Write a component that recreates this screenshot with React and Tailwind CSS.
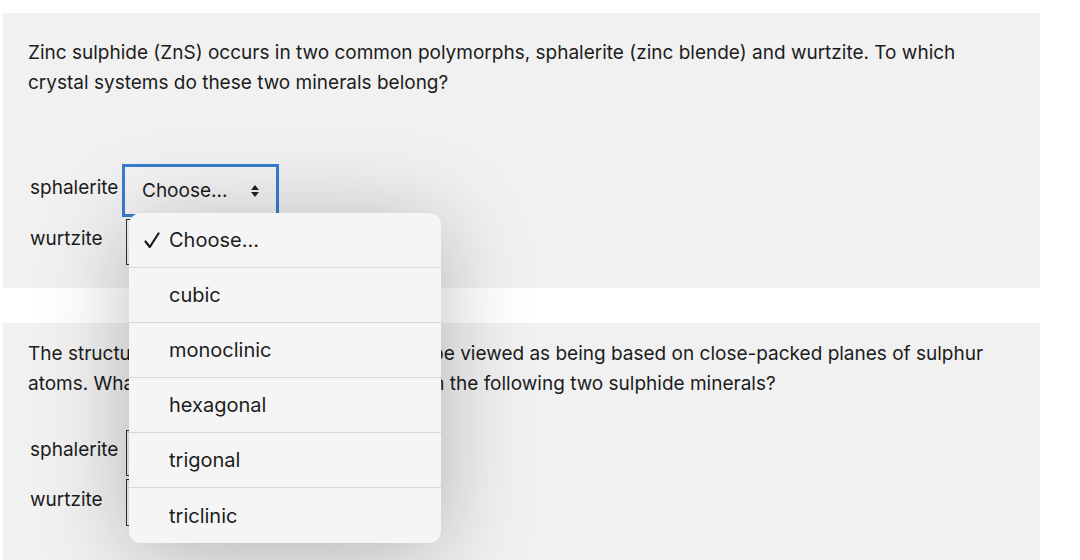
import { useState } from "react";

const OPTIONS = ["cubic", "monoclinic", "hexagonal", "trigonal", "triclinic"];

export default function App() {
  const [open] = useState(true);

  return (
    <div
      className="relative w-[1080px] h-[560px] overflow-hidden bg-white text-[19px] leading-[30px] text-[#1c1c1c]"
      style={{ fontFamily: "Inter, 'Noto Sans', sans-serif" }}
    >
      {/* Question 1 */}
      <div className="mt-[13px] ml-[3px] w-[1037px] h-[275px] bg-[#f1f1f1] px-[25px] pt-[25px]">
        <p>
          Zinc sulphide (ZnS) occurs in two common polymorphs, sphalerite (zinc blende) and wurtzite. To which
          <br />
          crystal systems do these two minerals belong?
        </p>

        <div className="mt-[66px] flex flex-col">
          <div className="flex items-center h-[53px]">
            <span className="w-[94px] shrink-0 pl-[2px] pb-[6px]">sphalerite</span>
            <div className="w-[157px] h-[53px] border-[3px] border-[#3a7bd0] bg-[#f3f3f3] flex items-center justify-between pl-[17px] pr-[16px]">
              <span>Choose...</span>
              <svg width="10" height="14" viewBox="0 0 10 14" className="text-[#222]">
                <path d="M5 1 L9 6 H1 Z" fill="currentColor" />
                <path d="M5 13 L9 8 H1 Z" fill="currentColor" />
              </svg>
            </div>
          </div>
          <div className="flex items-center h-[46px] mt-[2px]">
            <span className="w-[98px] shrink-0 pl-[2px] pb-[6px]">wurtzite</span>
            <div className="w-[149px] h-[46px] border border-[#333] bg-[#f3f3f3]" />
          </div>
        </div>
      </div>

      {/* Question 2 */}
      <div className="mt-[35px] ml-[3px] w-[1037px] h-[260px] bg-[#f1f1f1] px-[25px] pt-[16px]">
        <p>
          The structures of both of these minerals can be viewed as being based on close-packed planes of sulphur
          <br />
          atoms. What is the coordination type of zinc in the following two sulphide minerals?
        </p>

        <div className="mt-[31px] flex flex-col gap-[3px]">
          <div className="flex items-center h-[46px]">
            <span className="w-[98px] shrink-0 pl-[2px] pb-[6px]">sphalerite</span>
            <div className="w-[149px] h-[46px] border border-[#333] bg-[#f3f3f3]" />
          </div>
          <div className="flex items-center h-[47px]">
            <span className="w-[98px] shrink-0 pl-[2px] pb-[6px]">wurtzite</span>
            <div className="w-[149px] h-[47px] border border-[#333] bg-[#f3f3f3]" />
          </div>
        </div>
      </div>

      {/* Open select menu */}
      {open && (
        <div className="absolute left-[129px] top-[213px] w-[312px] rounded-[12px] bg-[#f5f5f5] shadow-[0_10px_90px_rgba(0,0,0,0.26)] overflow-hidden text-[20px]">
          <div className="h-[55px] flex items-center border-b border-[#d6d6d6]">
            <svg width="16" height="17" viewBox="0 0 16 17" className="ml-[15px] mr-[9px]">
              <path d="M1.5 9.5 L5.8 15 L14.5 1.5" fill="none" stroke="#1c1c1c" strokeWidth="2.2" strokeLinecap="round" strokeLinejoin="round" />
            </svg>
            <span>Choose...</span>
          </div>
          {OPTIONS.map((o, i) => (
            <div
              key={o}
              className={`h-[55px] flex items-center pl-[40px] ${i < OPTIONS.length - 1 ? "border-b border-[#d6d6d6]" : ""}`}
            >
              {o}
            </div>
          ))}
        </div>
      )}
    </div>
  );
}
